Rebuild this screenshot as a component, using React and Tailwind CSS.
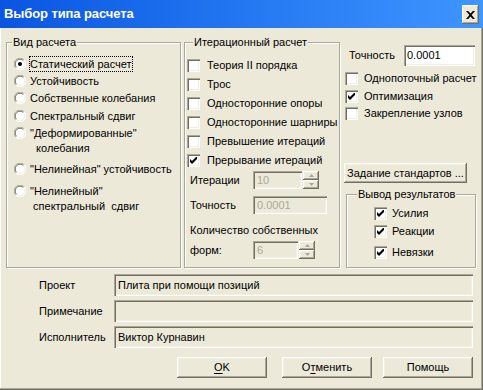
import React from 'react';

const sunken = 'shadow-[inset_1px_1px_0_#aca899,inset_2px_2px_0_#716f64,inset_-1px_-1px_0_#fff,inset_-2px_-2px_0_#f1efe2]';
const raised = 'shadow-[inset_-1px_-1px_0_#716f64,inset_1px_1px_0_#fff,inset_-2px_-2px_0_#aca899,inset_2px_2px_0_#f1efe2]';
const etched = 'border border-[#aca899] shadow-[1px_1px_0_#fff,inset_1px_1px_0_#fff]';

function Check({ checked }) {
  return (
    <span className={`w-[13px] h-[13px] shrink-0 bg-white ${sunken} flex items-center justify-center`}>
      {checked && (
        <svg width="7" height="7" viewBox="0 0 7 7">
          <polygon points="0,2 2,4 7,-1 7,2 2,7 0,5" fill="#000" />
        </svg>
      )}
    </span>
  );
}

function Radio({ on }) {
  return (
    <svg width="12" height="12" viewBox="0 0 12 12" className="shrink-0">
      <circle cx="6" cy="6" r="5.5" fill="#fff" />
      <path d="M1.8 10.2 A5.9 5.9 0 0 1 10.2 1.8" fill="none" stroke="#aca899" />
      <path d="M2.6 9.4 A4.8 4.8 0 0 1 9.4 2.6" fill="none" stroke="#716f64" />
      <path d="M10.2 1.8 A5.9 5.9 0 0 1 1.8 10.2" fill="none" stroke="#fff" />
      <path d="M9.4 2.6 A4.8 4.8 0 0 1 2.6 9.4" fill="none" stroke="#f1efe2" />
      {on && <circle cx="6" cy="6" r="2" fill="#000" />}
    </svg>
  );
}

function Group({ label, labelLeft, className, children }) {
  return (
    <div className={`relative ${etched} ${className}`}>
      <span className={`absolute top-[-8px] ${labelLeft} bg-[#ece9d8] px-[1px] leading-[14px]`}>{label}</span>
      {children}
    </div>
  );
}

function SpinBtn({ up }) {
  return (
    <div className={`h-[9px] bg-[#ece9d8] ${raised} flex items-center justify-center`}>
      <svg width="5" height="3" viewBox="0 0 5 3">
        <polygon points={up ? '2.5,0 5,3 0,3' : '0,0 5,0 2.5,3'} fill="#aca899" />
      </svg>
    </div>
  );
}

function Spin() {
  return (
    <div className="flex flex-col w-[16px] h-[18px] ml-[1px]">
      <SpinBtn up />
      <SpinBtn />
    </div>
  );
}

function Button({ className, children }) {
  return (
    <div className={`bg-[#ece9d8] ${raised} flex items-center justify-center ${className}`}>{children}</div>
  );
}

export default function App() {
  const radios = [
    { lines: ['Статический расчет'], on: true, mt: 'mt-[13px]', h: 'h-[16px]' },
    { lines: ['Устойчивость'], mt: 'mt-[1px]', h: 'h-[16px]' },
    { lines: ['Собственные колебания'], mt: 'mt-[1px]', h: 'h-[16px]' },
    { lines: ['Спектральный сдвиг'], mt: 'mt-[2px]', h: 'h-[16px]' },
    { lines: ['"Деформированные"', '  колебания'], mt: 'mt-[1px]', h: 'h-[30px]' },
    { lines: ['"Нелинейная" устойчивость'], mt: 'mt-[6px]', h: 'h-[16px]' },
    { lines: ['"Нелинейный"', ' спектральный  сдвиг'], mt: 'mt-[6px]', h: 'h-[30px]' },
  ];

  const iterChecks = [
    { label: 'Теория II порядка', mt: 'mt-[14px]' },
    { label: 'Трос', mt: 'mt-[3px]' },
    { label: 'Односторонние опоры', mt: 'mt-[3px]' },
    { label: 'Односторонние шарниры', mt: 'mt-[3px]' },
    { label: 'Превышение итераций', mt: 'mt-[3px]' },
    { label: 'Прерывание итераций', mt: 'mt-[3px]', checked: true },
  ];

  const fields = [
    { label: 'Проект', value: 'Плита при помощи позиций', mt: 'mt-[6px]' },
    { label: 'Примечание', value: '', mt: 'mt-[4px]' },
    { label: 'Исполнитель', value: 'Виктор Курнавин', mt: 'mt-[4px]' },
  ];

  return (
    <div className="w-[483px] h-[390px] bg-[#ece9d8] flex flex-col overflow-hidden font-['Liberation_Sans',Arial,sans-serif] text-[11px] text-black shadow-[inset_-1px_-1px_0_#716f64,inset_-2px_-2px_0_#aca899,inset_1px_0_0_#fff]">
      {/* Title bar */}
      <div className="h-[28px] shrink-0 flex items-center bg-gradient-to-r from-[#0a55e2] to-[#3e96ff] pl-[4px] pr-[4px]">
        <span className="text-white font-bold text-[13px] tracking-[-0.1px]">Выбор типа расчета</span>
        <div className={`ml-auto w-[17px] h-[19px] mt-[1px] bg-[#ece9d8] ${raised} flex items-center justify-center`}>
          <svg width="9" height="8" viewBox="0 0 9 8">
            <path d="M0 0h2.2l2.3 2.6L6.8 0H9L5.6 4L9 8H6.8L4.5 5.4L2.2 8H0l3.4-4z" fill="#000" />
          </svg>
        </div>
      </div>

      {/* Columns */}
      <div className="flex mt-[14px] h-[226px] shrink-0">
        <Group label="Вид расчета" labelLeft="left-[5px]" className="ml-[6px] w-[175px] h-[226px]">
          <div className="flex flex-col pl-[7px]">
            {radios.map((r, i) => (
              <div key={i} className={`${r.mt} ${r.h} flex items-start`}>
                <div className="h-[16px] flex items-center">
                  <Radio on={r.on} />
                </div>
                <div className="ml-[3px] flex flex-col">
                  {r.lines.map((l, j) => (
                    <span
                      key={j}
                      className={`whitespace-pre ${j === 0 ? 'h-[16px] leading-[16px]' : 'h-[14px] leading-[14px]'} ${r.on ? 'outline-1 outline-dotted outline-black outline-offset-[-1px] px-[1px]' : 'px-[1px]'}`}
                    >
                      {l}
                    </span>
                  ))}
                </div>
              </div>
            ))}
          </div>
        </Group>

        <Group label="Итерационный расчет" labelLeft="left-[8px]" className="ml-[3px] w-[156px] h-[226px]">
          <div className="flex flex-col">
            {iterChecks.map((c, i) => (
              <div key={i} className={`${c.mt} h-[16px] flex items-center pl-[2px]`}>
                <Check checked={c.checked} />
                <span className="ml-[7px]">{c.label}</span>
              </div>
            ))}
            <div className="mt-[3px] h-[18px] flex items-center pl-[5px]">
              <span className="w-[63px]">Итерации</span>
              <div className={`w-[49px] h-[18px] ${sunken} flex items-center pl-[4px] text-[#aca899]`}>10</div>
              <Spin />
            </div>
            <div className="mt-[7px] h-[18px] flex items-center pl-[5px]">
              <span className="w-[63px]">Точность</span>
              <div className={`w-[74px] h-[18px] ${sunken} flex items-center pl-[4px] text-[#aca899]`}>0.0001</div>
            </div>
            <div className="mt-[9px] h-[14px] leading-[14px] pl-[5px]">Количество собственных</div>
            <div className="mt-[4px] h-[18px] flex items-center pl-[5px]">
              <span className="w-[63px]">форм:</span>
              <div className={`w-[45px] h-[18px] ${sunken} flex items-center pl-[4px] text-[#aca899]`}>6</div>
              <Spin />
            </div>
          </div>
        </Group>

        <div className="ml-[4px] w-[133px] flex flex-col">
          <div className="mt-[3px] h-[21px] flex items-center">
            <span className="pl-[5px] w-[60px]">Точность</span>
            <div className={`w-[71px] h-[21px] bg-white ${sunken} flex items-center pl-[3px]`}>0.0001</div>
          </div>
          <div className="mt-[4px] h-[16px] flex items-center pl-[1px]">
            <Check />
            <span className="ml-[6px]">Однопоточный расчет</span>
          </div>
          <div className="mt-[2px] h-[16px] flex items-center pl-[1px]">
            <Check checked />
            <span className="ml-[6px]">Оптимизация</span>
          </div>
          <div className="mt-[1px] h-[16px] flex items-center pl-[1px]">
            <Check />
            <span className="ml-[6px]">Закрепление узлов</span>
          </div>
          <Button className="mt-[42px] w-[123px] h-[20px]">Задание стандартов ...</Button>
          <Group label="Вывод результатов" labelLeft="left-[10px]" className="mt-[11px] ml-[2px] w-[130px] h-[74px]">
            <div className="flex flex-col pl-[27px]">
              {[
                { label: 'Усилия', mt: 'mt-[10px]' },
                { label: 'Реакции', mt: 'mt-[2px]' },
                { label: 'Невязки', mt: 'mt-[5px]' },
              ].map((c, i) => (
                <div key={i} className={`${c.mt} h-[16px] flex items-center`}>
                  <Check checked />
                  <span className="ml-[5px]">{c.label}</span>
                </div>
              ))}
            </div>
          </Group>
        </div>
      </div>

      {/* Fields */}
      {fields.map((f, i) => (
        <div key={i} className={`${f.mt} h-[22px] flex items-center shrink-0`}>
          <span className="w-[114px] pl-[39px]">{f.label}</span>
          <div className={`w-[359px] h-[22px] bg-[#ece9d8] ${sunken} flex items-center pl-[4px]`}>{f.value}</div>
        </div>
      ))}

      {/* Buttons */}
      <div className="mt-[9px] h-[21px] flex shrink-0">
        <Button className="ml-[177px] w-[90px] h-[21px]">
          <span className="underline underline-offset-2">O</span>K
        </Button>
        <Button className="ml-[15px] w-[90px] h-[21px]">
          О<span className="underline underline-offset-2">т</span>менить
        </Button>
        <Button className="ml-[11px] w-[90px] h-[21px]">Помощь</Button>
      </div>
    </div>
  );
}
